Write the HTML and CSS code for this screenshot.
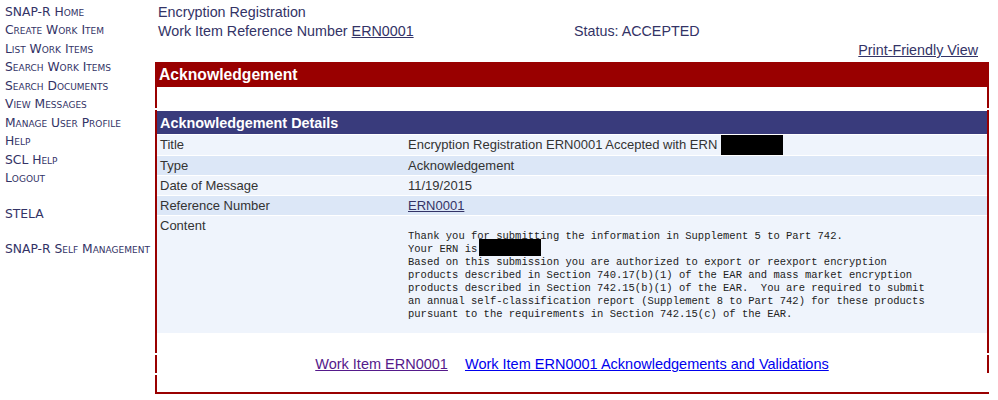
FILE: index.html
```html
<!DOCTYPE html>
<html>
<head>
<meta charset="utf-8">
<title>Encryption Registration</title>
<link rel="stylesheet" href="styles.css">
</head>
<body>
<div class="page">
  <nav class="nav">
    <a href="#">SNAP-R Home</a>
    <a href="#">Create Work Item</a>
    <a href="#">List Work Items</a>
    <a href="#">Search Work Items</a>
    <a href="#">Search Documents</a>
    <a href="#">View Messages</a>
    <a href="#">Manage User Profile</a>
    <a href="#">Help</a>
    <a href="#">SCL Help</a>
    <a href="#">Logout</a>
    <a href="#" class="spaced">STELA</a>
    <a href="#" class="spaced">SNAP-R Self Management</a>
  </nav>
  <main class="main">
    <div class="hdr">Encryption Registration</div>
    <div class="hdr hdr-row">
      <span class="ref">Work Item Reference Number <a href="#" class="navlink">ERN0001</a></span>
      <span>Status: ACCEPTED</span>
    </div>
    <div class="print"><a href="#" class="navlink">Print-Friendly View</a></div>
    <div class="redbar">Acknowledgement</div>
    <div class="seg seg-top"></div>
    <div class="seg seg-main">
      <div class="bluebar">Acknowledgement Details</div>
      <div class="details">
        <div class="row light"><div class="lbl">Title</div><div class="val">Encryption Registration ERN0001 Accepted with ERN <span class="redact"></span></div></div>
        <div class="row dark"><div class="lbl">Type</div><div class="val">Acknowledgement</div></div>
        <div class="row light"><div class="lbl">Date of Message</div><div class="val">11/19/2015</div></div>
        <div class="row dark"><div class="lbl">Reference Number</div><div class="val"><a href="#" class="navlink">ERN0001</a></div></div>
        <div class="row light content"><div class="lbl">Content</div><div class="val"><pre class="msg">Thank you for submitting the information in Supplement 5 to Part 742.
Your ERN is<span class="redact small"></span>
Based on this submission you are authorized to export or reexport encryption
products described in Section 740.17(b)(1) of the EAR and mass market encryption
products described in Section 742.15(b)(1) of the EAR.  You are required to submit
an annual self-classification report (Supplement 8 to Part 742) for these products
pursuant to the requirements in Section 742.15(c) of the EAR.</pre></div></div>
      </div>
    </div>
    <div class="seg seg-links">
      <a href="#" class="visited">Work Item ERN0001</a>
      <a href="#" class="fresh">Work Item ERN0001 Acknowledgements and Validations</a>
    </div>
    <div class="seg seg-bottom"></div>
  </main>
</div>
</body>
</html>
```

FILE: styles.css
```css
html, body {
  margin: 0;
  padding: 0;
  background: #ffffff;
}

.page {
  display: flex;
  align-items: flex-start;
}

.nav {
  width: 155px;
  flex: none;
  display: flex;
  flex-direction: column;
  padding: 3px 0 0 5px;
  box-sizing: border-box;
  font-family: "DejaVu Sans", Verdana, sans-serif;
  font-size: 12.3px;
  font-variant: small-caps;
  line-height: 18.45px;
}

.nav a {
  color: #333366;
  text-decoration: none;
  white-space: nowrap;
}

.nav a.spaced {
  margin-top: 17px;
}

.main {
  flex: 1;
  margin-right: 9px;
  padding-top: 3px;
  font-family: "Liberation Sans", Arial, sans-serif;
  color: #333366;
}

.hdr {
  font-size: 14.3px;
  line-height: 19px;
  padding-left: 3px;
}

.hdr-row {
  display: flex;
}

.ref {
  width: 416px;
}

.navlink {
  color: #333366;
  text-decoration: underline;
}

.print {
  text-align: right;
  font-size: 14.3px;
  line-height: 19px;
  padding-right: 11px;
}

.redbar {
  margin-top: 2px;
  height: 25px;
  line-height: 25px;
  background: #990000;
  color: #ffffff;
  font-weight: bold;
  font-size: 15.7px;
  padding-left: 4px;
}

.seg {
  border-left: 2px solid #990000;
  border-right: 2px solid #990000;
}

.seg-top {
  height: 21px;
}

.seg-main {
  margin-top: 2px;
  padding-top: 1px;
  height: 243px;
  box-sizing: border-box;
}

.bluebar {
  height: 23px;
  line-height: 24px;
  background: #393b7c;
  color: #ffffff;
  font-weight: bold;
  font-size: 14.4px;
  padding-left: 3px;
}

.details {
  display: flex;
  flex-direction: column;
  gap: 1px;
  margin-top: 1px;
  color: #333333;
  font-size: 13px;
}

.row {
  display: grid;
  grid-template-columns: 248px 1fr;
  min-height: 19px;
  line-height: 19px;
}

.row.light {
  background: #eff4fc;
}

.row.dark {
  background: #dce7f7;
}

.lbl, .val {
  padding: 0 3px;
}

.row.content {
  height: 117px;
}

.row.content .val {
  padding-top: 14px;
}

.msg {
  margin: 0;
  font-family: "Liberation Mono", "Courier New", monospace;
  font-size: 10.5px;
  line-height: 13px;
  color: #222222;
}

.redact {
  display: inline-block;
  width: 62px;
  height: 20px;
  background: #000000;
  vertical-align: top;
}

.redact.small {
  height: 17px;
  width: 62px;
  margin-top: -4px;
  margin-left: 2px;
  vertical-align: top;
}

.seg-links {
  margin-top: 2px;
  height: 18px;
  text-align: center;
  font-size: 14.5px;
  line-height: 19px;
}

.seg-links a {
  margin: 0 6.5px;
}

.visited {
  color: #551a8b;
}

.fresh {
  color: #0000ee;
}

.seg-bottom {
  margin-top: 2px;
  height: 17px;
  border-right: none;
  border-bottom: 2px solid #990000;
}
```
